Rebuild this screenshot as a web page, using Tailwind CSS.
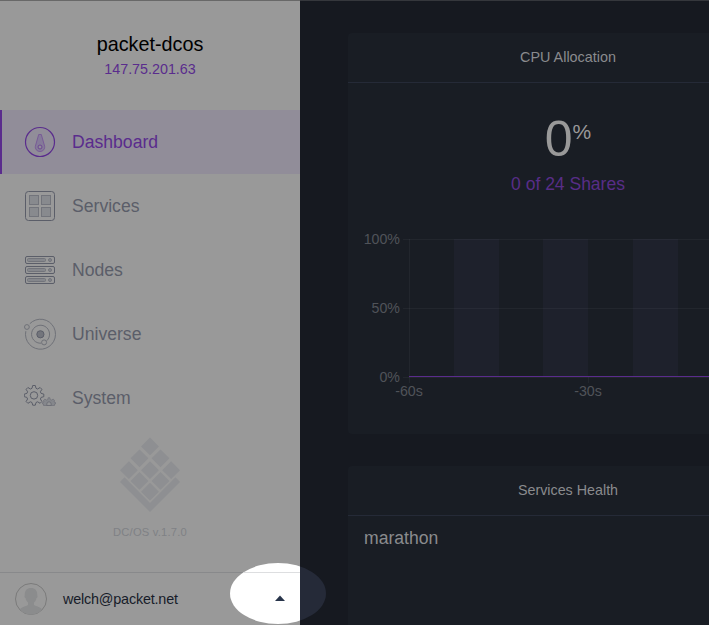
<!DOCTYPE html>
<html lang="en">
<head>
<meta charset="utf-8">
<title>DC/OS Dashboard</title>
<script src="https://cdn.jsdelivr.net/npm/@tailwindcss/browser@4"></script>
</head>
<body class="relative flex h-[625px] w-[709px] overflow-hidden bg-[#161920] font-['Liberation_Sans',Arial,sans-serif]">
<aside class="flex h-full w-[300px] shrink-0 flex-col border-t border-[#686868] bg-[#999999]">
  <header class="flex h-[109px] shrink-0 flex-col items-center pt-[31px]">
    <h1 class="text-[19.8px] leading-6 text-black">packet-dcos</h1>
    <div class="mt-[3px] text-[14.3px] leading-5 text-[#5a2c8d]">147.75.201.63</div>
  </header>
  <nav class="flex shrink-0 flex-col text-[17.6px] text-[#5b5e69]">
    <a class="flex h-16 items-center border-l-2 border-[#5a2c8d] bg-[#918d99] pl-[22px] text-[#5a2c8d]">
      <svg class="h-8 w-8" viewBox="0 0 32 32" fill="none" stroke="#5a2c8d"><circle cx="16" cy="16" r="14.5" stroke-width="1.2"/><path d="M14.7 8.500h2.600l3 10.500c1.500 4-1.500 6.500-4.300 6.500s-5.800-2.500-4.300-6.500z" fill="#857a99" stroke="#735095" stroke-width=".8"/><circle cx="16" cy="21" r="2" fill="#918d99" stroke="#6d4792" stroke-width="1"/></svg>
      <span class="ml-4">Dashboard</span>
    </a>
    <a class="flex h-16 items-center pl-6">
      <svg class="h-8 w-8" viewBox="0 0 32 32" fill="none" stroke="#5b5e69"><rect x="1.5" y="1.5" width="29" height="29" rx="3"/><g fill="#888a8e" stroke="#72747b"><rect x="5.5" y="5.5" width="9" height="9"/><rect x="17.5" y="5.5" width="9" height="9"/><rect x="5.5" y="17.5" width="9" height="9"/><rect x="17.5" y="17.5" width="9" height="9"/></g></svg>
      <span class="ml-4">Services</span>
    </a>
    <a class="flex h-16 items-center pl-6">
      <svg class="h-8 w-8" viewBox="0 0 32 32" fill="none" stroke="#5b5e69"><rect x="1.5" y="2.5" width="29" height="7" rx="1.5"/><rect x="1.5" y="12.5" width="29" height="7" rx="1.5"/><rect x="1.5" y="22.5" width="29" height="7" rx="1.5"/><g fill="#85878c" stroke="#72747b"><rect x="3.5" y="4.5" width="18" height="3" rx="1"/><rect x="3.5" y="14.5" width="18" height="3" rx="1"/><rect x="3.5" y="24.5" width="18" height="3" rx="1"/><circle cx="26" cy="6" r="1.5"/><circle cx="26" cy="16" r="1.5"/><circle cx="26" cy="26" r="1.5"/></g></svg>
      <span class="ml-4">Nodes</span>
    </a>
    <a class="flex h-16 items-center pl-6">
      <svg class="h-8 w-8" viewBox="0 0 32 32" fill="none" stroke="#6f7178"><path d="M5.800 5.700A15 15 0 1 1 1.800 13.200M22.800 22.700A9 9 0 1 0 17.200 25.200"/><circle cx="2.900" cy="9" r="2.400"/><circle cx="20.100" cy="24.400" r="2.500"/><circle cx="16.400" cy="16.300" r="3.600" fill="#73757c" stroke="#5b5e69"/></svg>
      <span class="ml-4">Universe</span>
    </a>
    <a class="flex h-16 items-center pl-6">
      <svg class="h-8 w-8" viewBox="0 0 32 32" fill="none" stroke="#5b5e69"><path d="M8.700 3.500h2.600l.7 2.800 1.600.7 2.500-1.500 1.800 1.800-1.500 2.500.7 1.600 2.700.7v2.600l-2.700.7-.7 1.600 1.500 2.500-1.800 1.800-2.500-1.500-1.600.7-.7 2.700H8.700L8 20.500l-1.600-.7-2.500 1.500-1.800-1.800 1.500-2.500-.7-1.600-2.600-.7v-2.600l2.600-.7.7-1.600-1.500-2.500 1.800-1.800L6.400 7l1.600-.7z" stroke-linejoin="round"/><circle cx="10" cy="13.400" r="3.700"/><path d="M19.500 23.500v-1.500h-1v-1.500l1.500-.5-.5-1.700 1.400-1.200 1.700 1 1.200-.6.400-1.800h1.600l.4 1.800 1.200.6 1.700-1 1.400 1.200-.5 1.700 1.500.5v1.500h-1v1.500z" fill="#85878c" stroke="#72747b" stroke-width=".8"/><path d="M22.800 23.500v-1.500a2.200 2.200 0 0 1 4.400 0v1.500z" fill="#939496" stroke="#686a72" stroke-width=".8"/></svg>
      <span class="ml-4">System</span>
    </a>
  </nav>
  <div class="flex flex-1 flex-col items-center pt-[7px]">
    <svg class="h-[76px] w-[60px]" viewBox="0 0 60 76" fill="#8e8f92"><path d="M30 0.500 38.900 9.400 30 18.300 21.100 9.400zM19.500 12.400 28.400 21.300 19.500 30.200 10.600 21.300zM40.500 12.400 49.400 21.300 40.500 30.200 31.600 21.300zM8.900 24.300 17.800 33.200 8.900 42.100 0 33.200zM30 24.300 38.900 33.200 30 42.100 21.100 33.200zM51.100 24.300 60 33.200 51.100 42.100 42.200 33.200zM19.500 35 28.400 43.900 19.500 52.800 10.600 43.900zM40.500 35 49.400 43.900 40.500 52.800 31.600 43.900zM30 45.800 38.900 54.700 30 63.600 21.100 54.700zM0 45 4.500 40.300 30 66 55.500 40.300 60 45 30 75z"/></svg>
    <div class="mt-[11px] text-[11.200px] leading-4 tracking-[.2px] text-[#7f8185]">DC/OS v.1.7.0</div>
  </div>
  <footer class="flex h-[53px] shrink-0 items-center border-t border-[#88898b] pl-[15px]">
    <svg class="h-8 w-8" viewBox="0 0 32 32"><circle cx="16" cy="16" r="15.500" fill="#999" stroke="#7b7b7b"/><path d="M16 5c4.300 0 6.500 3 6.200 7.200.7.800.3 2.500-.8 3-.4 2-1.200 3.300-2.400 4.300V22c2.500 1.600 5.800 1.500 8.300 4.500A15 15 0 0 1 4.700 26.500C7.200 23.500 10.500 23.600 13 22v-2.500c-1.200-1-2-2.300-2.400-4.300-1.100-.5-1.500-2.200-.8-3C9.500 8 11.700 5 16 5z" fill="#8b8c8d"/></svg>
    <span class="ml-4 pt-px text-[14.400px] tracking-[-.19px] text-[#171c29]">welch@packet.net</span>
  </footer>
</aside>
<main class="flex min-w-0 flex-1 flex-col gap-8 overflow-hidden border-t border-[#35373c] pl-12 pt-8">
  <section class="h-[401px] w-[440px] shrink-0 rounded bg-[#191d24]">
    <h2 class="h-[50px] border-b border-[#252a37] text-center text-[14.400px] leading-[48px] text-[#8a8b8e]">CPU Allocation</h2>
    <div class="flex h-[78px] items-start justify-center pt-[28px] text-[#999999]"><span class="text-[50px] leading-[56px]">0</span><span class="mt-[9px] text-[21px] leading-6">%</span></div>
    <div class="mt-[11px] text-center text-[17.500px] leading-6 text-[#582d87]">0 of 24 Shares</div>
    <svg class="mt-[32px] block h-[180px] w-[440px] font-['Liberation_Sans',Arial,sans-serif]" viewBox="0 0 440 180" font-size="14.200" fill="#505359">
      <path d="M106 11h45v138h-45zM195 11h45v138h-45zM285 11h45v138h-45z" fill="#1e212c"/>
      <path d="M55 11.500h385M55 80.500h385M55 149.500h385M61.500 11v144M240.500 149v6" stroke="#fff" stroke-opacity=".045"/>
      <path d="M61 148.500h379" stroke="#5a2c8d"/>
      <g text-anchor="end"><text x="52" y="16">100%</text><text x="52" y="85">50%</text><text x="52" y="154">0%</text></g>
      <g text-anchor="middle"><text x="61" y="168">-60s</text><text x="240" y="168">-30s</text></g>
    </svg>
  </section>
  <section class="h-[401px] w-[440px] shrink-0 rounded bg-[#191d24]">
    <h2 class="h-[50px] border-b border-[#252a37] text-center text-[14.300px] leading-[48px] text-[#8a8b8e]">Services Health</h2>
    <div class="px-4 pt-[10px] text-[17.600px] leading-6 text-[#8a8b8e]">marathon</div>
  </section>
</main>
<svg class="absolute left-[230px] top-[563px] h-[61px] w-[96px]" viewBox="0 0 96 61">
  <defs><clipPath id="spot"><ellipse cx="48" cy="30.500" rx="48" ry="30.500"/></clipPath></defs>
  <g clip-path="url(#spot)"><path d="M0 0h70v61H0z" fill="#fff"/><path d="M70 0h26v61H70z" fill="#252a38"/><path d="M0 9.500h70" stroke="#dddee0"/><path d="M45 38 50 32.500l5 5.500z" fill="#28344a"/></g>
</svg>
</body>
</html>
